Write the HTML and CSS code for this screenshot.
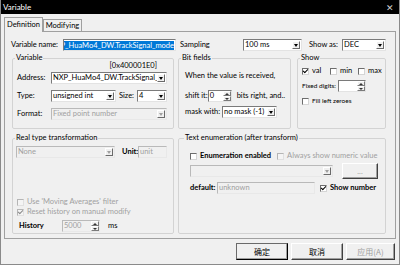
FILE: index.html
```html
<!DOCTYPE html>
<html lang="en">
<head>
    <meta charset="UTF-8">
    <title>Variable</title>
    <link rel="stylesheet" href="styles.css">
</head>
<body>
    <div class="window">
        <div class="titlebar">
            <span class="title">Variable</span>
            <span class="close">✕</span>
        </div>
        <div class="tabs">
            <div class="tab active">Definition</div>
            <div class="tab">Modifying</div>
        </div>
        <div class="panel">
            <div class="name-row">
                <span class="lbl lbl-name">Variable name:</span>
                <div class="field name-field"><span class="sel">NXP_HuaMo4_DW.TrackSignal_mode</span></div>
                <span class="lbl lbl-sampling">Sampling</span>
                <div class="combo w-sampling"><span class="val">100 ms</span><span class="drop"></span></div>
                <span class="lbl lbl-showas">Show as:</span>
                <div class="combo w-showas"><span class="val">DEC</span><span class="drop"></span></div>
            </div>

            <div class="groups">
                <fieldset class="group g-var">
                    <legend>Variable</legend>
                    <div class="hex">[0x400001E0]</div>
                    <div class="form-row">
                        <span class="lbl w-lbl">Address:</span>
                        <div class="combo w-addr"><span class="val">NXP_HuaMo4_DW.TrackSignal_mode</span><span class="drop"></span></div>
                    </div>
                    <div class="form-row">
                        <span class="lbl w-lbl">Type:</span>
                        <div class="combo w-type"><span class="val">unsigned int</span><span class="drop"></span></div>
                        <span class="lbl lbl-size">Size:</span>
                        <div class="combo w-size"><span class="val">4</span><span class="drop"></span></div>
                    </div>
                    <div class="form-row">
                        <span class="lbl w-lbl">Format:</span>
                        <div class="combo w-addr disabled"><span class="val">Fixed point number</span><span class="drop"></span></div>
                    </div>
                </fieldset>

                <fieldset class="group g-bits">
                    <legend>Bit fields</legend>
                    <div class="bits-text">When the value is received,</div>
                    <div class="form-row bits-shift">
                        <span class="lbl lbl-shift">shift it:</span>
                        <div class="spin w-shift"><span class="val">0</span><span class="arrows"><i class="up"></i><i class="down"></i></span></div>
                        <span class="lbl lbl-bits">bits right, and..</span>
                    </div>
                    <div class="form-row bits-mask">
                        <span class="lbl lbl-mask">mask with:</span>
                        <div class="combo w-mask"><span class="val">no mask (-1)</span><span class="drop"></span></div>
                    </div>
                </fieldset>

                <fieldset class="group g-show">
                    <legend>Show</legend>
                    <div class="show-checks">
                        <label class="check"><span class="cb on"></span>val</label>
                        <label class="check"><span class="cb"></span>min</label>
                        <label class="check"><span class="cb"></span>max</label>
                    </div>
                    <div class="form-row small fixed-row">
                        <span class="lbl lbl-fixed">Fixed digits:</span>
                        <div class="spin w-fixed"><span class="val"></span><span class="arrows"><i class="up"></i><i class="down"></i></span></div>
                    </div>
                    <label class="check small fill-row"><span class="cb"></span>Fill left zeroes</label>
                </fieldset>

                <fieldset class="group g-real">
                    <legend>Real type transformation</legend>
                    <div class="form-row real-top">
                        <div class="combo w-none disabled"><span class="val">None</span><span class="drop"></span></div>
                        <span class="lbl lbl-unit strong">Unit:</span>
                        <div class="field w-unit disabled"><span class="val">unit</span></div>
                    </div>
                    <div class="real-bottom">
                        <label class="check disabled"><span class="cb"></span>Use 'Moving Averages' filter</label>
                        <label class="check disabled"><span class="cb on"></span>Reset history on manual modify</label>
                        <div class="form-row history-row">
                            <span class="lbl lbl-history strong">History</span>
                            <div class="spin w-history disabled"><span class="val">5000</span><span class="arrows"><i class="up"></i><i class="down"></i></span></div>
                            <span class="lbl lbl-ms">ms</span>
                        </div>
                    </div>
                </fieldset>

                <fieldset class="group g-enum">
                    <legend>Text enumeration (after transform)</legend>
                    <div class="form-row enum-checks">
                        <label class="check strong"><span class="cb"></span>Enumeration enabled</label>
                        <label class="check disabled always"><span class="cb"></span>Always show numeric value</label>
                    </div>
                    <div class="form-row enum-list">
                        <div class="combo w-enum disabled"><span class="val"></span><span class="drop"></span></div>
                        <div class="btn btn-dots disabled">...</div>
                    </div>
                    <div class="form-row enum-default">
                        <span class="lbl lbl-default strong">default:</span>
                        <div class="field w-default disabled"><span class="val">unknown</span></div>
                        <label class="check strong shownum"><span class="cb on"></span>Show number</label>
                    </div>
                </fieldset>
            </div>
        </div>

        <div class="buttons">
            <div class="btn btn-main default">确定</div>
            <div class="btn btn-main">取消</div>
            <div class="btn btn-main btn-apply disabled">应用(A)</div>
        </div>
    </div>
</body>
</html>
```

FILE: styles.css
```css
* {
    box-sizing: border-box;
}
body {
    margin: 0;
    background: #f0f0f0;
    font-family: Lato, "Liberation Sans", sans-serif;
    font-size: 7.5px;
    color: #000;
}
.window {
    width: 400px;
    height: 265px;
    background: #f0f0f0;
    border: 1px solid #8a8a8a;
    border-top: none;
    display: flex;
    flex-direction: column;
}
.titlebar {
    height: 14px;
    flex-shrink: 0;
    background: #000;
    color: #fff;
    font-size: 8px;
    display: flex;
    align-items: center;
    justify-content: space-between;
    padding: 0 5px 0 2px;
}
.close {
    font-size: 9px;
    color: #cfcfcf;
}
.tabs {
    height: 17px;
    flex-shrink: 0;
    display: flex;
    align-items: flex-end;
    padding-left: 3px;
}
.tab {
    width: 39px;
    height: 12px;
    line-height: 11px;
    text-align: center;
    border: 1px solid #a0a0a0;
    border-bottom: none;
    background: #f0f0f0;
}
.tab.active {
    height: 15px;
    line-height: 13px;
    margin-bottom: -1px;
    position: relative;
    z-index: 1;
}
.panel {
    margin: 0 3px 0 3px;
    height: 208px;
    border: 1px solid #a0a0a0;
    padding: 7px 5px 4px 7px;
}
.name-row {
    display: flex;
    align-items: center;
    height: 12px;
    margin-left: -1px;
}
.lbl {
    white-space: nowrap;
    line-height: 10px;
}
.strong {
    font-weight: bold;
}
.lbl-name { width: 52px; letter-spacing: -0.1px; }
.lbl-sampling { width: 63px; margin-left: 4px; }
.lbl-showas { width: 33px; margin-left: 7px; }

/* controls */
.field,
.combo,
.spin {
    height: 12px;
    display: flex;
    align-items: center;
    background: #fff;
    border: 1px solid;
    border-color: #7a7a7a #e3e3e3 #e3e3e3 #7a7a7a;
    overflow: hidden;
    flex-shrink: 0;
}
.val {
    flex: 1;
    min-width: 0;
    padding-left: 1px;
    white-space: nowrap;
    overflow: hidden;
    line-height: 10px;
}
.disabled .val {
    color: #a0a0a0;
}
.combo.disabled,
.field.disabled,
.spin.disabled {
    background: #f0f0f0;
    border-color: #b9b9b9 #e8e8e8 #e8e8e8 #b9b9b9;
}
.drop {
    width: 8px;
    height: 8px;
    margin-right: 1px;
    flex-shrink: 0;
    background: #f0f0f0;
    border: 1px solid;
    border-color: #fff #6a6a6a #6a6a6a #fff;
    display: flex;
    align-items: center;
    justify-content: center;
}
.drop::after {
    content: "";
    border-style: solid;
    border-width: 3px 2.5px 0 2.5px;
    border-color: #000 transparent transparent transparent;
}
.disabled .drop::after {
    border-top-color: #a0a0a0;
}
.name-field {
    width: 113px;
    justify-content: flex-end;
    padding-right: 1px;
}
.sel {
    background: #0078d7;
    color: #fff;
    white-space: nowrap;
    line-height: 9px;
}
.w-sampling { width: 59px; }
.w-showas { width: 44px; }

.arrows {
    width: 8px;
    height: 10px;
    display: flex;
    flex-direction: column;
    flex-shrink: 0;
}
.arrows i {
    flex: 1;
    background: #f0f0f0;
    border: 1px solid;
    border-color: #fff #7a7a7a #7a7a7a #fff;
    display: flex;
    align-items: center;
    justify-content: center;
}
.arrows i::after {
    content: "";
    border-style: solid;
    border-color: transparent;
}
.arrows .up::after {
    border-width: 0 2px 2px 2px;
    border-bottom-color: #333;
}
.arrows .down::after {
    border-width: 2px 2px 0 2px;
    border-top-color: #333;
}

/* checkboxes */
.check {
    display: flex;
    align-items: center;
    white-space: nowrap;
    line-height: 10px;
}
.cb {
    width: 7px;
    height: 7px;
    margin-right: 3px;
    flex-shrink: 0;
    background: #fff;
    border: 1px solid;
    border-color: #6d6d6d #d5d5d5 #d5d5d5 #6d6d6d;
    display: flex;
    justify-content: center;
}
.cb.on::after {
    content: "";
    width: 2px;
    height: 4px;
    margin-top: -1px;
    border: solid #000;
    border-width: 0 1px 1px 0;
    transform: rotate(45deg);
}
.check.disabled {
    color: #a0a0a0;
}
.check.disabled .cb {
    background: #f4f4f4;
    border-color: #b5b5b5 #e0e0e0 #e0e0e0 #b5b5b5;
}
.check.disabled .cb.on::after {
    border-color: #8a8a8a;
}

/* group boxes */
.groups {
    margin-top: 3px;
    display: grid;
    grid-template-columns: 162px 113px 91px;
    grid-template-rows: 75px 100px;
    column-gap: 4px;
    row-gap: 5px;
}
.groups .g-show {
    margin-left: 2px;
}
.group {
    margin: 0;
    min-width: 0;
    border: 1px solid #d3d3d3;
    border-radius: 2px;
    padding: 0 6px 0 4px;
}
.group legend {
    padding: 0 1px;
    margin-left: -2px;
    line-height: 8px;
    white-space: nowrap;
}
.form-row {
    display: flex;
    align-items: center;
}

.hex {
    line-height: 8px;
    text-align: right;
    padding-right: 10px;
}
.g-var .form-row {
    margin-top: 6px;
}
.g-var .form-row:nth-of-type(2) {
    margin-top: 2px;
}
.w-lbl { width: 34px; }
.w-addr { width: 116px; }
.w-type { width: 65px; }
.lbl-size { width: 18px; margin-left: 3px; }
.w-size { width: 30px; }

.g-bits {
    padding-left: 6px;
}
.g-bits legend {
    margin-left: -4px;
}
.bits-text {
    margin-top: 9px;
    line-height: 10px;
}
.bits-shift { margin-top: 9px; }
.bits-mask { margin-top: 4px; }
.lbl-shift { width: 23px; }
.w-shift { width: 24px; }
.lbl-bits { margin-left: 5px; }
.lbl-mask { width: 37px; }
.w-mask { width: 55px; }

.show-checks {
    margin-top: 4px;
    display: grid;
    grid-template-columns: 28px 28px auto;
}
.small {
    font-size: 6.5px;
}
.fixed-row { margin-top: 4px; }
.lbl-fixed { width: 36px; }
.w-fixed { width: 28px; }
.fill-row { margin-top: 4px; }

.g-real {
    padding: 0 6px 1px 3px;
    display: flex;
    flex-direction: column;
}
.g-real legend {
    margin-left: -1px;
}
.real-top { margin-top: 4px; }
.w-none { width: 99px; }
.lbl-unit { width: 16px; margin-left: 7px; }
.w-unit { width: 29px; }
.real-bottom {
    margin-top: auto;
    padding-left: 1px;
}
.history-row {
    margin-top: 3px;
    padding-left: 2px;
}
.lbl-history { width: 43px; }
.w-history { width: 38px; }
.lbl-ms { margin-left: 8px; }

.g-enum {
    grid-column: 2 / 4;
    padding-left: 11px;
}
.g-enum legend {
    margin-left: -6px;
}
.enum-checks { margin-top: 9px; }
.always { margin-left: 6px; }
.enum-list {
    margin-top: 2px;
    height: 16px;
}
.w-enum { width: 143px; }
.btn {
    display: flex;
    align-items: center;
    justify-content: center;
    background: #f0f0f0;
    border: 1px solid;
    border-color: #fff #404040 #404040 #fff;
    box-shadow: inset -1px -1px #a0a0a0;
}
.btn.disabled {
    color: #a0a0a0;
}
.btn-dots {
    width: 36px;
    height: 16px;
    margin-left: 9px;
}
.enum-default { margin-top: 3px; }
.lbl-default { width: 27px; }
.w-default { width: 98px; }
.shownum { margin-left: 5px; }

.buttons {
    margin-top: 4px;
    display: flex;
    justify-content: flex-end;
    gap: 3px;
    padding-right: 4px;
}
.btn-main {
    width: 52px;
    height: 17px;
    font-family: "Noto Sans CJK SC", sans-serif;
    font-size: 8px;
}
.btn-main.default {
    border-color: #6a6a6a #000 #000 #6a6a6a;
}
.btn-apply {
    width: 49px;
}
```
